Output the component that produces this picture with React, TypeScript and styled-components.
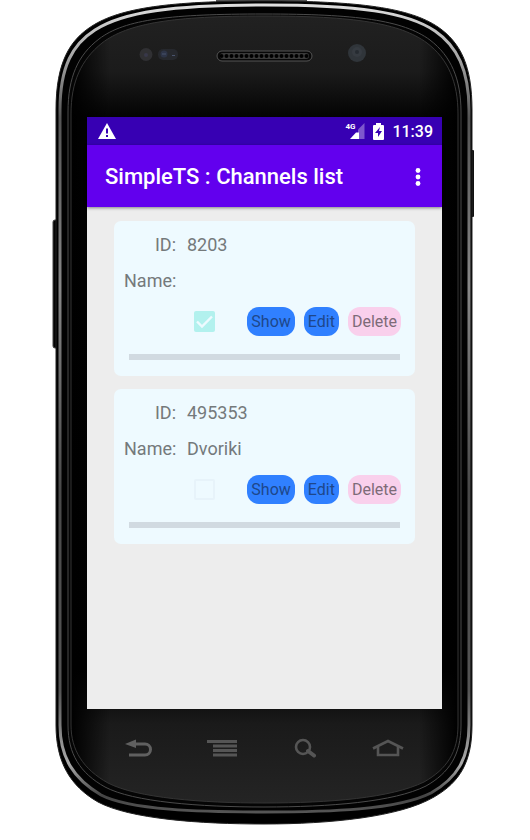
import React, { useState } from "react";
import styled, { createGlobalStyle } from "styled-components";

const GlobalStyle = createGlobalStyle`
  * { box-sizing: border-box; }
  body { margin: 0; background: #fff; font-family: Roboto, "Liberation Sans", sans-serif; }
  button { font-family: inherit; border: 0; padding: 0; background: none; cursor: pointer; }
`;

const Phone = styled.main`
  position: relative;
  display: grid;
  grid-template-columns: 87fr 355fr 88fr;
  grid-template-rows: 117px auto 131px;
  min-height: 840px;
`;

const Body = styled.svg`
  position: absolute;
  inset: 0;
  width: 100%;
  height: 100%;
`;

const Screen = styled.section`
  position: relative;
  grid-column: 2;
  grid-row: 2;
  min-height: 592px;
  background: #ededed;
`;

const StatusBar = styled.div`
  display: flex;
  align-items: center;
  height: 28px;
  padding: 0 9px 0 11px;
  background: #3700b3;
  color: #fff;
  font-size: 16px;
  font-weight: 500;
`;

const StatusIcons = styled.div`
  display: flex;
  align-items: center;
  gap: 8px;
  margin-left: auto;
`;

const AppBar = styled.header`
  display: flex;
  align-items: center;
  justify-content: space-between;
  height: 62px;
  padding: 2px 12px 0 18px;
  background: #6200ee;
  box-shadow: 0 1px 3px rgba(0, 0, 0, 0.45);
`;

const Title = styled.h1`
  margin: 0;
  color: #fff;
  font-size: 22px;
  font-weight: 500;
  line-height: 28px;
  white-space: nowrap;
`;

const MenuButton = styled.button`
  display: grid;
  place-items: center;
  width: 24px;
  height: 32px;
`;

const List = styled.div`
  display: flex;
  flex-direction: column;
  gap: 13px;
  padding: 14px 27px;
`;

const Card = styled.article`
  padding: 5px 0 16px;
  border-radius: 7px;
  background: #eefaff;
`;

const Fields = styled.dl`
  display: grid;
  grid-template-columns: 52px 1fr;
  column-gap: 11px;
  grid-auto-rows: 36px;
  align-items: center;
  margin: 0;
  padding: 0 10px;
  color: #74797b;
  font-size: 18px;
`;

const Label = styled.dt`
  text-align: right;
`;

const Value = styled.dd`
  margin: 0;
`;

const Actions = styled.div`
  display: flex;
  align-items: center;
  gap: 9px;
  height: 46px;
  padding: 0 14px 0 80px;
`;

const CheckLabel = styled.label`
  display: grid;
  width: 21px;
  height: 21px;
  margin-right: auto;
  > * { grid-area: 1 / 1; }
`;

const CheckBox = styled.input`
  appearance: none;
  width: 21px;
  height: 21px;
  margin: 0;
  border: 2px solid #e7f3fa;
  border-radius: 2px;
  &:checked { background: #b2f1ee; border-color: #b2f1ee; }
`;

const Tick = styled.svg`
  width: 21px;
  height: 21px;
  z-index: 1;
  pointer-events: none;
`;

const PillButton = styled.button<{ $tone: "blue" | "pink" }>`
  && { padding: 0 4px; }
  height: 29px;
  border-radius: 12px;
  background: ${(p) => (p.$tone === "blue" ? "#3080ff" : "#f9d0ec")};
  color: ${(p) => (p.$tone === "blue" ? "#1e478a" : "#7d6b78")};
  font-size: 16px;
  line-height: 29px;
`;

const Progress = styled.progress`
  appearance: none;
  display: block;
  width: calc(100% - 30px);
  height: 6px;
  margin: 10px 15px 0;
  border: 0;
  background: #d1dae1;
  &::-webkit-progress-bar { background: #d1dae1; }
  &::-webkit-progress-value { background: #7fa8d8; }
`;

const NavBar = styled.nav`
  position: relative;
  grid-column: 2;
  grid-row: 3;
  display: grid;
  grid-template-columns: repeat(4, 1fr);
  align-self: start;
  height: 78px;
  padding: 0 13px 0 11px;
`;

const NavButton = styled.button`
  display: grid;
  place-items: center;
`;

const outer =
  "M56 110C56 62 70 40 92 26C120 8 170 1 264 1C360 1 410 8 438 27C461 43 472 66 472 110V725C472 762 460 782 434 797C400 817 330 824 264 824C200 824 130 819 98 802C70 786 56 762 56 725Z";
const rim =
  "M60 110C60 66 73 44 95 30C123 12 172 5 264 5C358 5 407 12 435 31C457 46 469 70 469 110V725C469 759 457 778 431 793C397 810 330 812 264 812C200 812 130 810 101 795C74 779 60 758 60 725Z";
const bezel =
  "M68 112C68 77 78 55 99 39C125 19 172 14 264 14C356 14 403 20 430 40C451 56 461 79 461 112V725C461 755 449 773 426 786C394 802 330 807 264 807C200 807 133 802 105 787C80 773 68 754 68 725Z";
const glass =
  "M71 114C71 82 81 60 102 43C128 23 174 16 264 16C354 16 400 23 427 43C448 59 458 82 458 114V725C458 752 447 769 424 782C391 798 330 803 264 803C202 803 137 798 108 783C83 769 71 750 71 725Z";

function PhoneBody() {
  return (
    <Body viewBox="0 0 530 840" preserveAspectRatio="none" aria-hidden="true">
      <defs>
        <linearGradient id="rim" x1="0" y1="0" x2="0" y2="1">
          <stop offset="0" stopColor="#dedede" />
          <stop offset=".06" stopColor="#aaa" />
          <stop offset=".14" stopColor="#555" />
          <stop offset=".35" stopColor="#888" />
          <stop offset=".6" stopColor="#4a4a4a" />
          <stop offset=".85" stopColor="#555" />
          <stop offset=".94" stopColor="#aaa" />
          <stop offset=".98" stopColor="#444" />
          <stop offset="1" stopColor="#555" />
        </linearGradient>
        <linearGradient id="glass" x1="0" y1="0" x2="0" y2="1">
          <stop offset="0" stopColor="#212121" />
          <stop offset=".07" stopColor="#1b1b1b" />
          <stop offset=".13" stopColor="#030303" />
          <stop offset=".83" stopColor="#000" />
          <stop offset=".9" stopColor="#1a1a1a" />
          <stop offset="1" stopColor="#242424" />
        </linearGradient>
        <linearGradient id="edge" x1="0" x2="1">
          <stop offset="0" stopColor="#000" />
          <stop offset=".1" stopColor="#000" stopOpacity="0" />
          <stop offset=".9" stopColor="#000" stopOpacity="0" />
          <stop offset="1" stopColor="#000" />
        </linearGradient>
        <pattern id="mesh" x="219" y="53" width="5" height="6" patternUnits="userSpaceOnUse">
          <rect width="5" height="6" fill="#3a3a3a" />
          <circle cx="2.5" cy="3" r="2" fill="#000" />
        </pattern>
      </defs>
      <rect x="216" width="91" height="3" fill="#555" />
      <rect x="53" y="220" width="8" height="128" rx="2" fill="#050505" stroke="#444" />
      <rect x="468" y="150" width="6" height="67" rx="1" fill="#111" />
      <path d={outer} fill="#000" stroke="#222" />
      <path d={rim} fill="#020202" stroke="url(#rim)" strokeWidth="3" />
      <path d={bezel} fill="#050505" stroke="#4b4b4b" />
      <path d={glass} fill="url(#glass)" />
      <path d={glass} fill="url(#edge)" stroke="#343434" />
      <rect x="217" y="51" width="95" height="10" rx="5" fill="#080808" stroke="#555" />
      <rect x="220" y="53" width="89" height="6" rx="3" fill="url(#mesh)" />
      <circle cx="146" cy="54.5" r="6.5" fill="#303033" />
      <circle cx="146" cy="55" r="2" fill="#38384a" />
      <rect x="158" y="49" width="20" height="11" rx="5" fill="#26282d" />
      <circle cx="164" cy="54" r="3.5" fill="#2d3447" />
      <path d="M162 54H166M172 55.500H175" stroke="#49536c" />
      <circle cx="357" cy="53" r="9" fill="#30353a" />
      <circle cx="357" cy="52" r="5" fill="#363b41" />
      <circle cx="357" cy="52" r="2" fill="#262b31" />
    </Body>
  );
}

const WarningIcon = () => (
  <svg width="18" height="16" viewBox="0 0 18 16" aria-label="Warning">
    <path d="M9 0L18 16H0Z" fill="#fff" />
    <path d="M8 5.500H10V10.500H8ZM8 12H10V14H8Z" fill="#3700b3" />
  </svg>
);

const Signal = styled.div`
  position: relative;
  display: flex;
  justify-content: flex-end;
  width: 20px;
`;

const Network = styled.span`
  position: absolute;
  left: 0;
  top: -1px;
  font-size: 8px;
  font-weight: 700;
  line-height: 9px;
`;

const SignalIcon = () => (
  <svg width="16" height="16" viewBox="0 0 16 16" aria-label="Signal">
    <path d="M15.500 0V16H9V6.500Z" fill="#7d57cd" />
    <path d="M1 16L7 9.500H10V16Z" fill="#fff" />
  </svg>
);

const BatteryIcon = () => (
  <svg width="11" height="17" viewBox="0 0 11 17" aria-label="Battery charging">
    <path d="M3 0H8V2H10A1 1 0 0 1 11 3V16A1 1 0 0 1 10 17H1A1 1 0 0 1 0 16V3A1 1 0 0 1 1 2H3Z" fill="#fff" />
    <path d="M7 4L2 10H5V14L9 8H6Z" fill="#3700b3" />
  </svg>
);

type Channel = { id: string; name: string; active: boolean };

const channels: Channel[] = [
  { id: "8203", name: "", active: true },
  { id: "495353", name: "Dvoriki", active: false },
];

function ChannelCard({ channel }: { channel: Channel }) {
  const [active, setActive] = useState(channel.active);
  return (
    <Card>
      <Fields>
        <Label>ID:</Label>
        <Value>{channel.id}</Value>
        <Label>Name:</Label>
        <Value>{channel.name}</Value>
      </Fields>
      <Actions>
        <CheckLabel>
          <CheckBox
            type="checkbox"
            aria-label={`Channel ${channel.id} active`}
            checked={active}
            onChange={(e) => setActive(e.target.checked)}
          />
          {active && (
            <Tick viewBox="0 0 21 21">
              <path d="M3 10.500L8 15.500L18 5.500" fill="none" stroke="#eefaff" strokeWidth="2.400" />
            </Tick>
          )}
        </CheckLabel>
        <PillButton $tone="blue">Show</PillButton>
        <PillButton $tone="blue">Edit</PillButton>
        <PillButton $tone="pink">Delete</PillButton>
      </Actions>
      <Progress value={0} max={100} aria-label={`Channel ${channel.id} progress`} />
    </Card>
  );
}

export default function App() {
  return (
    <>
      <GlobalStyle />
      <Phone>
        <PhoneBody />
        <Screen>
          <StatusBar>
            <WarningIcon />
            <StatusIcons>
              <Signal>
                <Network>4G</Network>
                <SignalIcon />
              </Signal>
              <BatteryIcon />
              <time>11:39</time>
            </StatusIcons>
          </StatusBar>
          <AppBar>
            <Title>SimpleTS : Channels list</Title>
            <MenuButton aria-label="More options">
              <svg width="6" height="20" viewBox="0 0 6 20" fill="#fff">
                <circle cx="3" cy="3.500" r="2.400" />
                <circle cx="3" cy="10" r="2.400" />
                <circle cx="3" cy="16.500" r="2.400" />
              </svg>
            </MenuButton>
          </AppBar>
          <List>
            {channels.map((c) => (
              <ChannelCard key={c.id} channel={c} />
            ))}
          </List>
        </Screen>
        <NavBar aria-label="Device buttons">
          <NavButton aria-label="Back">
            <svg width="28" height="20" viewBox="0 0 28 20">
              <path d="M8 6H20A5.500 5.500 0 0 1 20 17H4" fill="none" stroke="#606060" strokeWidth="3" />
              <path d="M0 6L11 1.500V10Z" fill="#606060" />
            </svg>
          </NavButton>
          <NavButton aria-label="Menu">
            <svg width="30" height="18" viewBox="0 0 30 18">
              <path d="M0 2.500H30M6 7H30M6 11.500H30M6 16H30" stroke="#555" strokeWidth="2.800" />
            </svg>
          </NavButton>
          <NavButton aria-label="Search">
            <svg width="24" height="20" viewBox="0 0 24 20" fill="none" stroke="#555">
              <circle cx="10" cy="9" r="7" strokeWidth="2.600" />
              <path d="M15 13L21 17.500" strokeWidth="4" strokeLinecap="round" />
            </svg>
          </NavButton>
          <NavButton aria-label="Home">
            <svg width="32" height="18" viewBox="0 0 32 18" fill="none" stroke="#555" strokeWidth="2.600">
              <path d="M1 9.500L16 2L31 9.500" />
              <path d="M6 8V16H26V8" />
            </svg>
          </NavButton>
        </NavBar>
      </Phone>
    </>
  );
}
